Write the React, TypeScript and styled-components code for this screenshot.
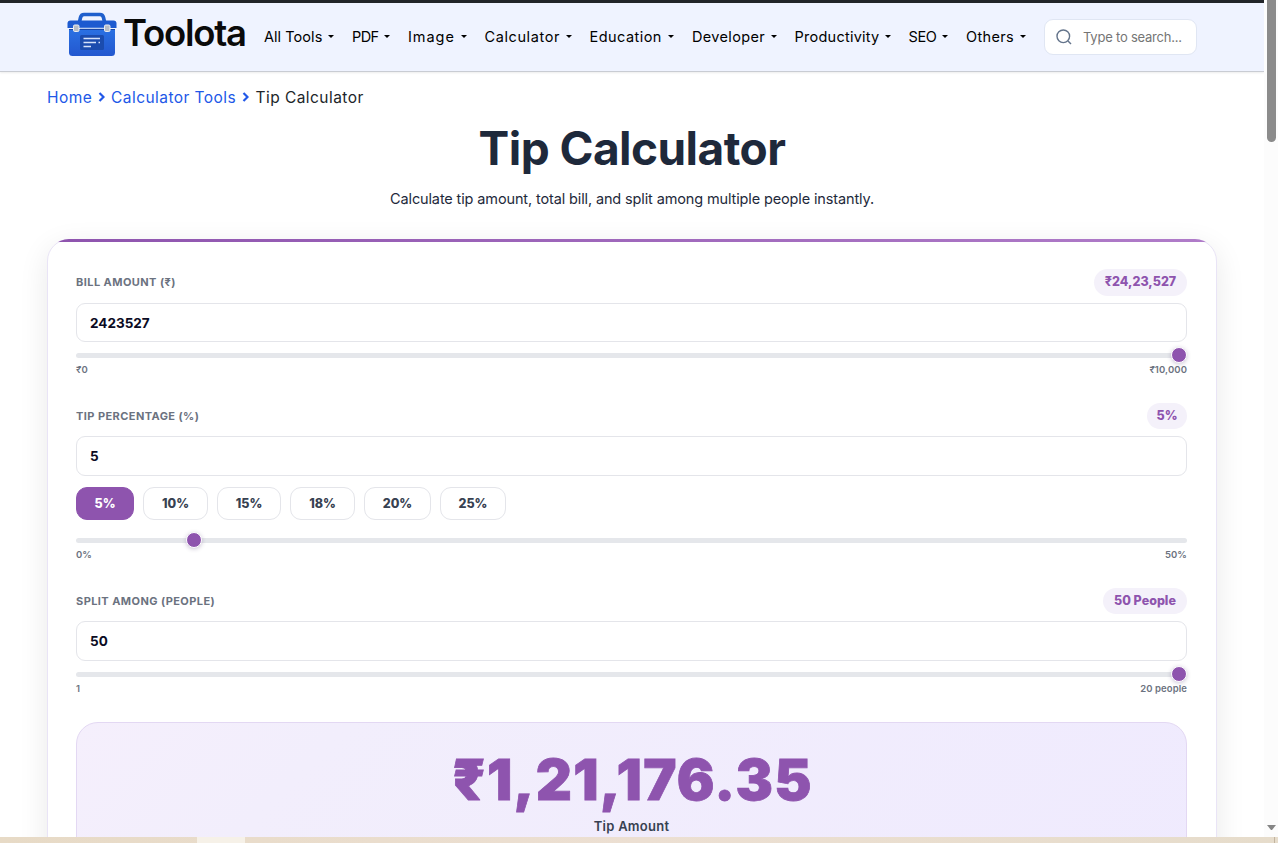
import React from 'react';
import styled, { createGlobalStyle } from 'styled-components';

const purple = '#8e54ae';
const display = "Inter, 'Noto Sans', sans-serif";

const Global = createGlobalStyle`
  * { box-sizing: border-box; }
  body { margin: 0; background: #fff; font-family: ${display}; overflow: hidden; }
  h1, p { margin: 0; }
`;

const Screen = styled.div`
  display: grid;
  grid-template-rows: 837px 6px;
  height: 843px;
  width: 1278px;
  overflow: hidden;
`;
const Viewport = styled.div`
  display: grid;
  grid-template-columns: 1264px 14px;
  overflow: hidden;
`;
const Page = styled.div`
  overflow: hidden;
  height: 837px;
  background: #fff;
`;

const Header = styled.header`
  display: flex;
  align-items: flex-start;
  height: 72px;
  padding-left: 67px;
  border-top: 3px solid #212529;
  border-bottom: 1px solid #c9ccd3;
  background: #eff3ff;
  box-shadow: 0 1px 2px rgba(0, 0, 0, 0.08);
`;
const Logo = styled.a`
  display: flex;
  width: 197px;
  padding-top: 9px;
`;
const LogoText = styled.span`
  margin: 0 0 0 5px;
  font: 600 36.5px/43px ${display};
  letter-spacing: -1.25px;
  color: #0a0a0a;
`;
const Nav = styled.nav`
  display: flex;
  height: 67px;
  align-items: center;
`;
const NavItem = styled.a<{ $w: number; $ls?: number }>`
  display: flex;
  align-items: center;
  justify-content: space-between;
  width: ${(p) => p.$w}px;
  padding-right: 18px;
  font-size: 14.5px;
  letter-spacing: ${(p) => p.$ls ?? 0}px;
  color: #000;
  white-space: nowrap;
`;
const Caret = styled.i`
  border: 3px solid transparent;
  border-top: 3.5px solid #000;
  border-bottom: 0;
`;
const Search = styled.label`
  display: flex;
  align-items: center;
  width: 153px;
  height: 36px;
  margin: 16px 0 0 0;
  padding-left: 11px;
  gap: 11px;
  border: 1px solid #e0e6f3;
  border-radius: 9px;
  background: #fff;
  font-size: 13px;
  letter-spacing: -0.22px;
  color: #757575;
`;

const Crumbs = styled.div`
  display: flex;
  align-items: center;
  height: 26px;
  margin: 12px 0 0 47px;
  font-size: 15.5px;
  letter-spacing: 0.45px;
  color: #212529;
`;
const Crumb = styled.a<{ $w: number }>`
  width: ${(p) => p.$w}px;
  color: #2158e8;
  white-space: nowrap;
`;
const Chevron = styled.svg`
  width: 7px;
  height: 10px;
  margin-right: 6.5px;
`;

const Title = styled.h1`
  height: 56px;
  margin-top: 10px;
  text-align: center;
  font: 700 46px/56px ${display};
  letter-spacing: -0.55px;
  color: #1e293b;
`;
const Subtitle = styled.p`
  height: 24px;
  margin-top: 11px;
  text-align: center;
  font: 400 14.5px/24px ${display};
  letter-spacing: -0.13px;
  color: #1e293b;
`;

const Card = styled.section`
  position: relative;
  width: 1170px;
  height: 700px;
  margin: 28px 0 0 47px;
  padding: 29px 29px 0 28px;
  border: 1px solid #e9e4f6;
  border-radius: 22px;
  background: #fff;
  box-shadow: 0 8px 30px rgba(0, 0, 0, 0.09);
`;
const AccentClip = styled.div`
  position: absolute;
  inset: -1px;
  border-radius: 22px;
  overflow: hidden;
  pointer-events: none;
  &::before {
    content: '';
    display: block;
    height: 3px;
    background: linear-gradient(90deg, ${purple}, #b07cc9);
  }
`;
const Field = styled.div`
  margin-bottom: 27px;
`;
const FieldHead = styled.div<{ $h: number }>`
  display: flex;
  align-items: center;
  justify-content: space-between;
  height: ${(p) => p.$h}px;
  margin-bottom: 7px;
`;
const FieldLabel = styled.span`
  padding-bottom: 1px;
  font-size: 11px;
  font-weight: 700;
  letter-spacing: 0.43px;
  color: #6b7280;
`;
const Pill = styled.span<{ $w: number }>`
  display: flex;
  align-items: center;
  justify-content: center;
  width: ${(p) => p.$w}px;
  height: 100%;
  padding-bottom: 2px;
  border-radius: 14px;
  background: #f4f1fa;
  font-size: 12.5px;
  font-weight: 800;
  color: ${purple};
`;
const Input = styled.div<{ $h: number }>`
  display: flex;
  align-items: center;
  height: ${(p) => p.$h}px;
  padding-left: 13px;
  border: 1px solid #e4e5ea;
  border-radius: 9px;
  font-size: 13.5px;
  font-weight: 700;
  color: #0b0b23;
`;
const Chips = styled.div`
  display: flex;
  gap: 9px;
  margin-top: 11px;
`;
const Chip = styled.button<{ $w: number; $active?: boolean }>`
  width: ${(p) => p.$w}px;
  height: 33px;
  padding: 0;
  border: 1px solid ${(p) => (p.$active ? purple : '#e4e5ea')};
  border-radius: 11px;
  background: ${(p) => (p.$active ? purple : '#fff')};
  color: ${(p) => (p.$active ? '#fff' : '#374151')};
  font: 800 12.5px ${display};
`;
const Slider = styled.div<{ $top: number }>`
  display: flex;
  align-items: center;
  height: 16px;
  margin-top: ${(p) => p.$top}px;
`;
const Track = styled.div`
  display: flex;
  align-items: center;
  width: 100%;
  height: 5px;
  border-radius: 3px;
  background: #e5e7eb;
`;
const Thumb = styled.div`
  flex: none;
  width: 16px;
  height: 16px;
  border: 1px solid #fff;
  border-radius: 50%;
  background: ${purple};
  box-shadow: 0 1px 4px rgba(50, 30, 90, 0.25);
`;
const Range = styled.div`
  display: flex;
  justify-content: space-between;
  height: 13px;
  line-height: 13px;
  font-size: 9.5px;
  font-weight: 600;
  letter-spacing: 0.1px;
  color: #6b7280;
`;
const Result = styled.div`
  height: 240px;
  padding-top: 22px;
  border: 1px solid #e3d8f3;
  border-radius: 22px;
  background: linear-gradient(135deg, #f5effc, #f2eefc 20%, #efeafe);
  text-align: center;
`;
const Amount = styled.div`
  height: 70px;
  padding-left: 2px;
  font: 900 56px/70px ${display};
  letter-spacing: 1.25px;
  -webkit-text-stroke: 0.8px ${purple};
  color: ${purple};
`;
const AmountLabel = styled.div`
  margin-top: 1px;
  font: 600 13px/20px ${display};
  letter-spacing: 0.25px;
  color: #374151;
`;

const Scrollbar = styled.div`
  display: flex;
  flex-direction: column;
  justify-content: space-between;
  padding: 0 2px 7px 3px;
  background: #fcfcfc;
`;
const ScrollThumb = styled.div`
  height: 142px;
  border-radius: 0 0 5px 5px;
  background: #8b8b8b;
`;
const ScrollArrow = styled.div`
  border: 4.5px solid transparent;
  border-top: 5px solid #858585;
  border-bottom: 0;
`;
const Taskbar = styled.div`
  display: flex;
  background: linear-gradient(90deg, #e7dac6, #ecdfd2 50%, #e6dccb);
  padding-left: 197px;
  &::before {
    content: '';
    width: 48px;
    background: #f6f1e8;
  }
  &::after {
    content: '';
    width: 1px;
    margin-left: 1029px;
    background: #c2b4a0;
  }
`;

const nav: [string, number, number][] = [
  ['All Tools', 88, 0.05],
  ['PDF', 56, -0.6],
  ['Image', 76.5, 0.95],
  ['Calculator', 105, 0.6],
  ['Education', 102.5, 0.45],
  ['Developer', 102.5, 0.35],
  ['Productivity', 114, 0.25],
  ['SEO', 57.5, -0.4],
  ['Others', 78, 0.35],
];
const chips: [string, number][] = [
  ['5%', 58], ['10%', 65], ['15%', 64], ['18%', 65], ['20%', 67], ['25%', 66],
];

const Toolbox = () => (
  <svg width="51" height="46" viewBox="0 0 51 46">
    <defs>
      <linearGradient id="body" x1="0" y1="0" x2="0" y2="1">
        <stop offset="0" stopColor="#2a70e2" />
        <stop offset="1" stopColor="#2357cf" />
      </linearGradient>
    </defs>
    <path d="M12.500 10L13.500 5.500Q14.200 2.500 17 2.500H33Q35.800 2.500 36.500 5.500L37.500 10" fill="none" stroke="#1f5fcd" strokeWidth="3.600" />
    <path d="M2 18H48V40.500Q48 44 44.500 44H5.500Q2 44 2 40.500Z" fill="url(#body)" />
    <path d="M0.500 16V11.500Q0.500 8.500 3.500 8.500H46.500Q49.500 8.500 49.500 11.500V16Z" fill="#1d5ad0" />
    <path d="M13 16.300H37" stroke="#b4c8ee" strokeWidth="1.200" />
    <path d="M2 17.500H48" stroke="#1746a8" strokeWidth="1" />
    <rect x="13" y="23" width="24" height="15" rx="1.500" fill="#1b4cae" />
    <path d="M16.500 26.500H33M16.500 30.500H29M31.500 30.500H33M16.500 34.500H24" stroke="#d5e2fa" strokeWidth="1.400" />
    <rect x="6.500" y="13" width="5.500" height="6.500" rx="1.200" fill="#b8bdc6" stroke="#eceff4" />
    <rect x="37.500" y="13" width="5.500" height="6.500" rx="1.200" fill="#b8bdc6" stroke="#eceff4" />
  </svg>
);

const Sep = () => (
  <Chevron viewBox="0 0 7 10">
    <path d="M1.500 1L5.500 5L1.500 9" fill="none" stroke="#2158e8" strokeWidth="2.200" />
  </Chevron>
);

export default function App() {
  return (
    <>
      <Global />
      <Screen>
        <Viewport>
          <Page>
            <Header>
              <Logo>
                <Toolbox />
                <LogoText>Toolota</LogoText>
              </Logo>
              <Nav>
                {nav.map(([label, w, ls]) => (
                  <NavItem key={label} $w={w} $ls={ls}>{label}<Caret /></NavItem>
                ))}
              </Nav>
              <Search>
                <svg width="16" height="16" viewBox="0 0 16 16" fill="none" stroke="#64748b" strokeWidth="1.400">
                  <circle cx="7.300" cy="7.300" r="6.300" />
                  <path d="M12 12L15 15" />
                </svg>
                Type to search...
              </Search>
            </Header>
            <Crumbs>
              <Crumb $w={50.5}>Home</Crumb><Sep />
              <Crumb $w={131}>Calculator Tools</Crumb><Sep />
              Tip Calculator
            </Crumbs>
            <Title>Tip Calculator</Title>
            <Subtitle>Calculate tip amount, total bill, and split among multiple people instantly.</Subtitle>
            <Card>
              <AccentClip />
              <Field>
                <FieldHead $h={27}><FieldLabel>BILL AMOUNT (₹)</FieldLabel><Pill $w={93}>₹24,23,527</Pill></FieldHead>
                <Input $h={39}>2423527</Input>
                <Slider $top={5}><Track><Thumb style={{ marginLeft: 1095 }} /></Track></Slider>
                <Range><span>₹0</span><span>₹10,000</span></Range>
              </Field>
              <Field>
                <FieldHead $h={26}><FieldLabel>TIP PERCENTAGE (%)</FieldLabel><Pill $w={40}>5%</Pill></FieldHead>
                <Input $h={40}>5</Input>
                <Chips>
                  {chips.map(([label, w], i) => (
                    <Chip key={label} $w={w} $active={i === 0}>{label}</Chip>
                  ))}
                </Chips>
                <Slider $top={12}><Track><Thumb style={{ marginLeft: 109.5 }} /></Track></Slider>
                <Range><span>0%</span><span>50%</span></Range>
              </Field>
              <Field>
                <FieldHead $h={26}><FieldLabel>SPLIT AMONG (PEOPLE)</FieldLabel><Pill $w={84}>50 People</Pill></FieldHead>
                <Input $h={40}>50</Input>
                <Slider $top={5}><Track><Thumb style={{ marginLeft: 1095 }} /></Track></Slider>
                <Range><span>1</span><span>20 people</span></Range>
              </Field>
              <Result>
                <Amount>₹1,21,176.35</Amount>
                <AmountLabel>Tip Amount</AmountLabel>
              </Result>
            </Card>
          </Page>
          <Scrollbar><ScrollThumb /><ScrollArrow /></Scrollbar>
        </Viewport>
        <Taskbar />
      </Screen>
    </>
  );
}
